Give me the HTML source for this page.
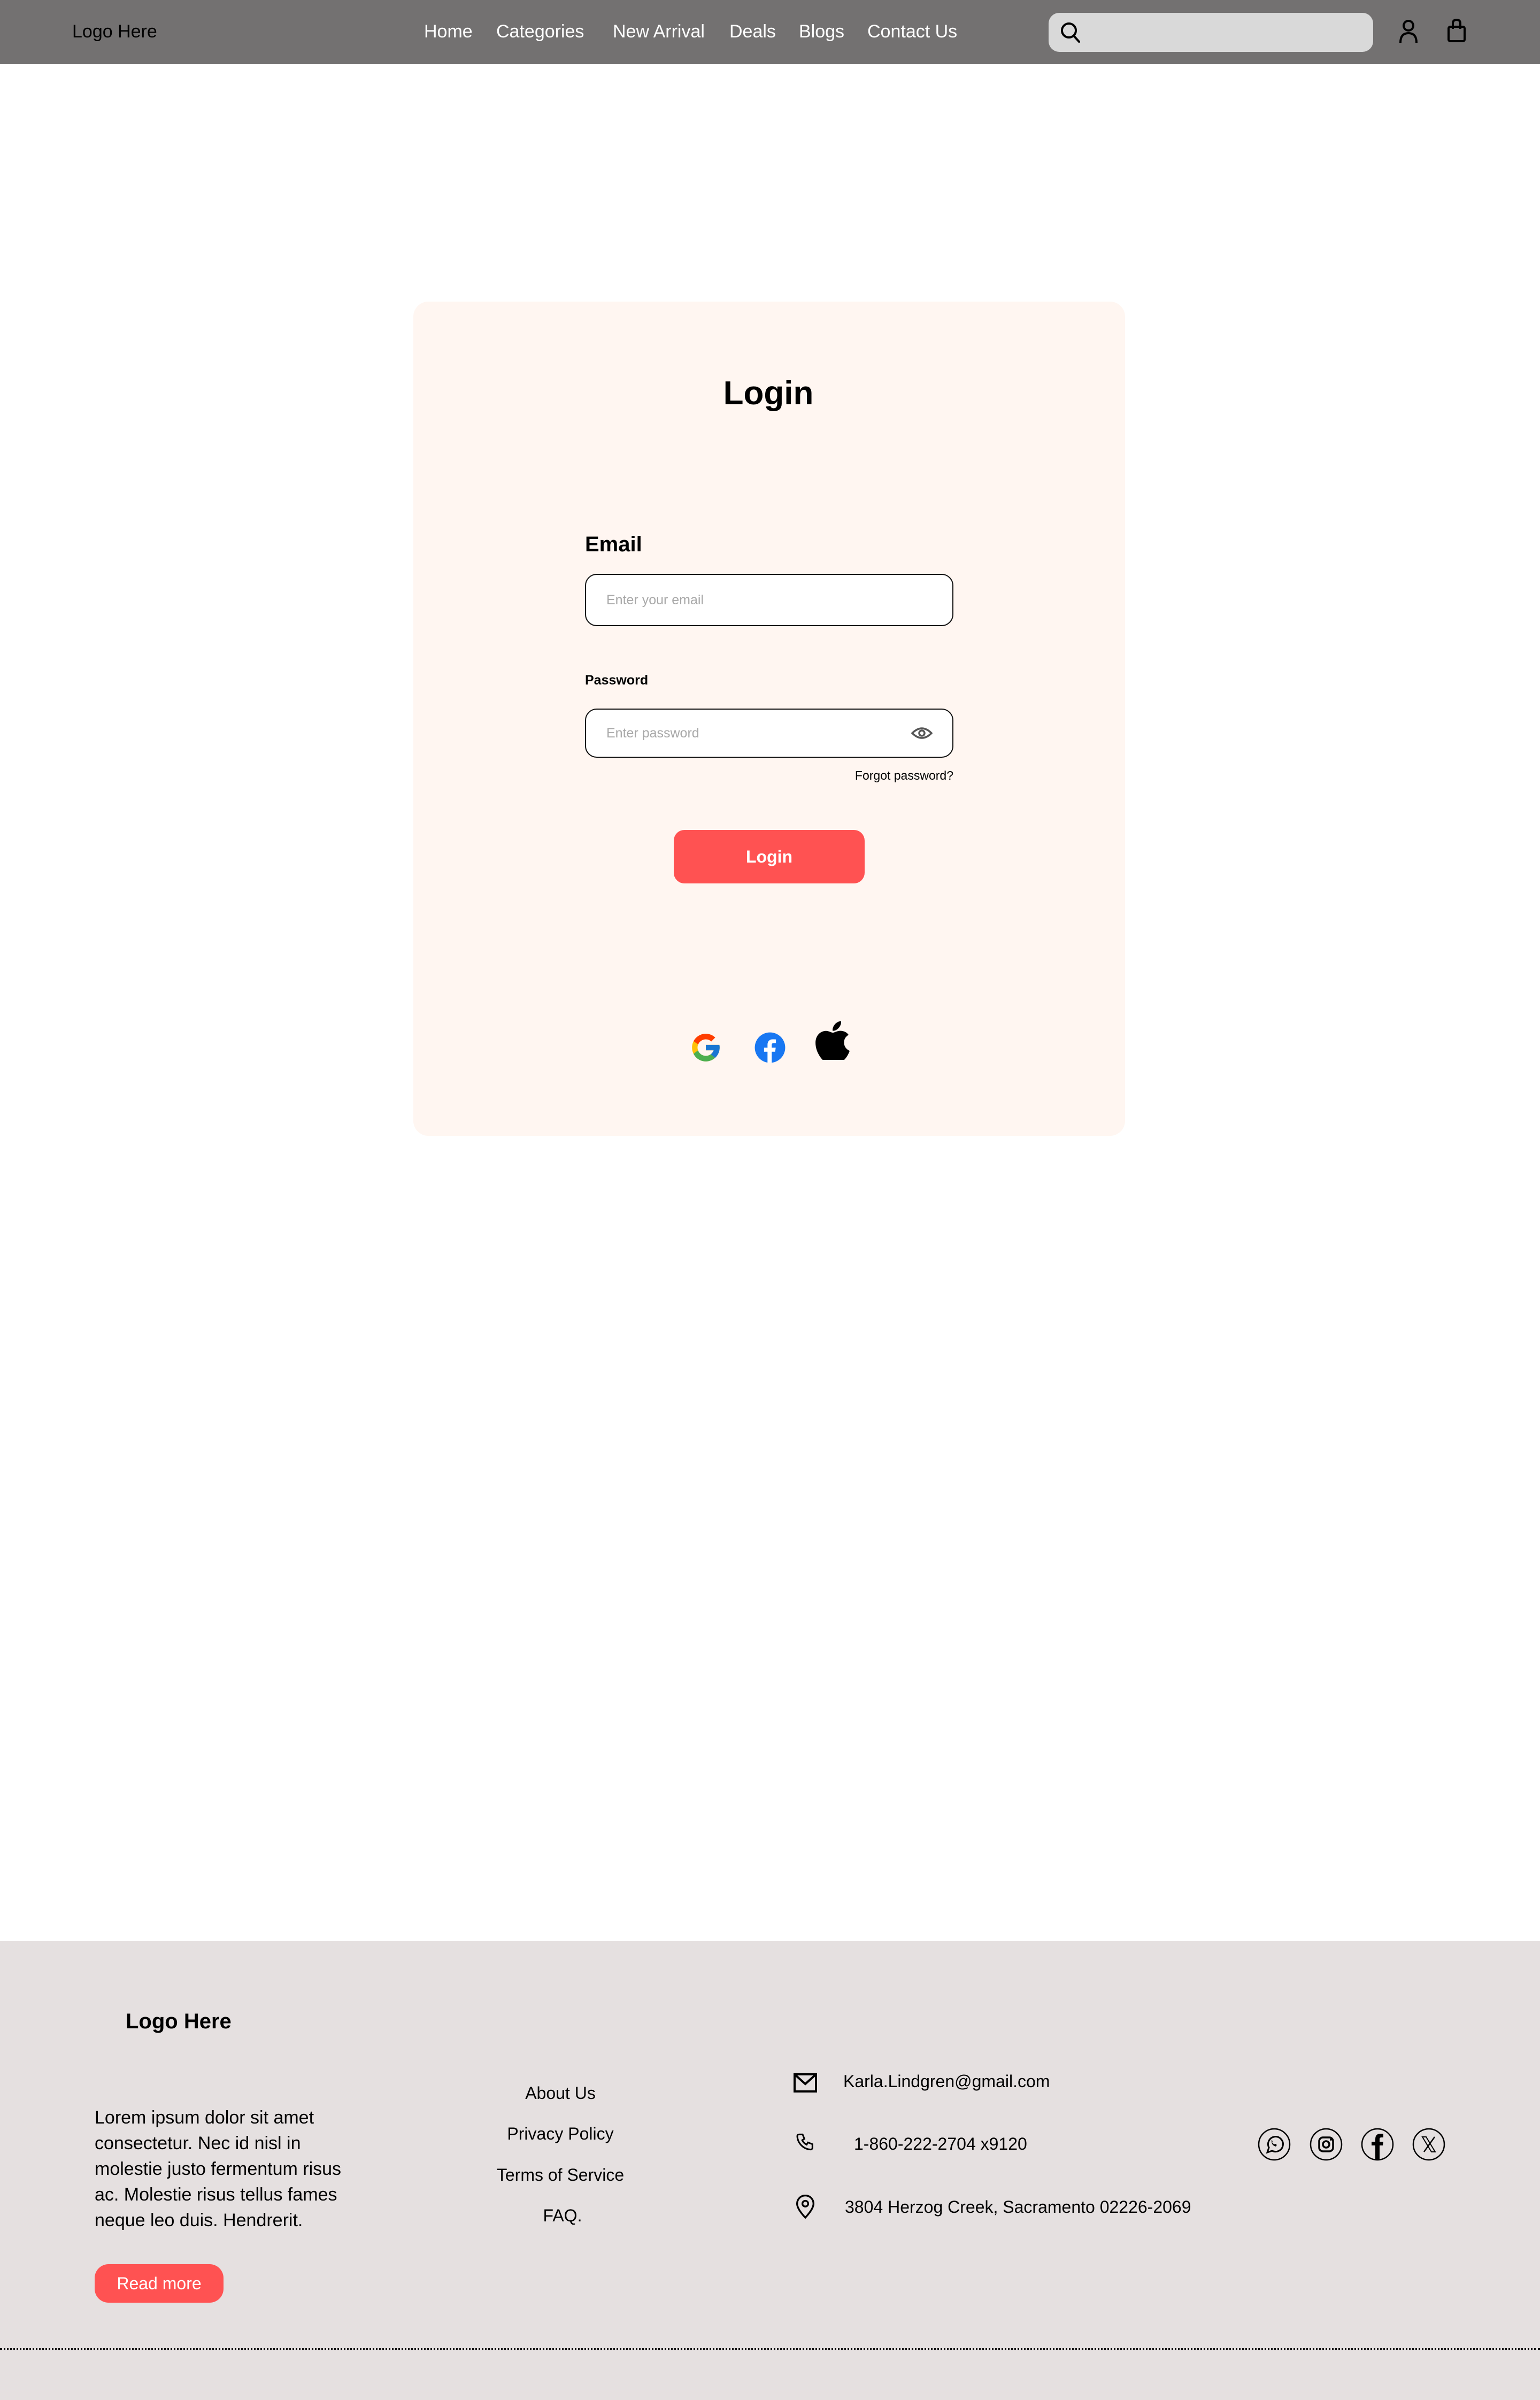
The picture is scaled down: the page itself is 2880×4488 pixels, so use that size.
<!DOCTYPE html>
<html><head><meta charset="utf-8"><style>
*{margin:0;padding:0;box-sizing:border-box}
body{width:2880px;height:4488px;position:relative;background:#fff;font-family:"Liberation Sans",sans-serif;overflow:hidden}
.a{position:absolute;white-space:nowrap}
nav{position:absolute;left:0;top:0;width:2880px;height:120px;background:#737171}
.nl{color:#fff;font-size:34px;top:40px}
.card{position:absolute;left:773px;top:564px;width:1331px;height:1560px;background:#fff6f1;border-radius:28px}
.inp{position:absolute;left:1094px;width:689px;border:2.5px solid #111;border-radius:22px;background:#fff}
.ph{color:#a8a8a8;font-size:25px}
footer{position:absolute;left:0;top:3630px;width:2880px;height:858px;background:#e5e0e0}
.fl{font-size:32px;color:#000;width:400px;text-align:center;left:848px}
.ci{font-size:32px;color:#000}
</style></head><body>
<nav>
<div class="a" style="left:135px;top:40px;font-size:34px;color:#000">Logo Here</div>
<div class="a nl" style="left:793px">Home</div>
<div class="a nl" style="left:928px">Categories</div>
<div class="a nl" style="left:1146px">New Arrival</div>
<div class="a nl" style="left:1364px">Deals</div>
<div class="a nl" style="left:1494px">Blogs</div>
<div class="a nl" style="left:1622px">Contact Us</div>
<div class="a" style="left:1961px;top:24px;width:607px;height:73px;background:#d9d9d9;border-radius:20px"></div>
<svg class="a" style="left:1982px;top:40px" width="40" height="42" viewBox="0 0 40 42"><circle cx="17" cy="17" r="13" fill="none" stroke="#000" stroke-width="4"/><path d="M27 28 L36 38" stroke="#000" stroke-width="4" stroke-linecap="round"/></svg>
<svg class="a" style="left:2616px;top:36px" width="36" height="46" viewBox="0 0 36 46"><circle cx="18" cy="12" r="9" fill="none" stroke="#000" stroke-width="4"/><path d="M3 44 Q3 26 18 26 Q33 26 33 44" fill="none" stroke="#000" stroke-width="4"/></svg>
<svg class="a" style="left:2706px;top:34px" width="36" height="46" viewBox="0 0 36 46"><rect x="3" y="16" width="30" height="27" rx="3" fill="none" stroke="#000" stroke-width="4"/><path d="M11 20 V10 Q11 3 18 3 Q25 3 25 10 V20" fill="none" stroke="#000" stroke-width="4"/></svg>
</nav>

<div class="card"></div>
<div class="a" style="left:1237px;width:400px;text-align:center;top:700px;font-size:62px;font-weight:bold">Login</div>
<div class="a" style="left:1094px;top:996px;font-size:40px;font-weight:bold">Email</div>
<div class="inp" style="top:1073px;height:98px"></div>
<div class="a ph" style="left:1134px;top:1108px">Enter your email</div>
<div class="a" style="left:1094px;top:1258px;font-size:25px;font-weight:bold">Password</div>
<div class="inp" style="top:1325px;height:92px"></div>
<div class="a ph" style="left:1134px;top:1357px">Enter password</div>
<svg class="a" style="left:1704px;top:1358px" width="40" height="26" viewBox="0 0 40 26"><path d="M2 13 Q20 -5 38 13 Q20 31 2 13Z" fill="none" stroke="#555" stroke-width="3.5"/><circle cx="20" cy="13" r="5" fill="none" stroke="#555" stroke-width="3.5"/></svg>
<div class="a" style="left:1483px;width:300px;text-align:right;top:1437px;font-size:23px">Forgot password?</div>
<div class="a" style="left:1260px;top:1552px;width:357px;height:100px;background:#ff5252;border-radius:20px;color:#fff;font-size:32px;font-weight:bold;text-align:center;line-height:100px">Login</div>

<svg class="a" style="left:1289px;top:1928px" width="62" height="62" viewBox="0 0 48 48"><path fill="#FFC107" d="M43.6 20H42V20H24v8h11.3C33.7 32.7 29.2 36 24 36c-6.6 0-12-5.4-12-12s5.4-12 12-12c3.1 0 5.8 1.2 7.900 3.1l5.700-5.700C34 6.100 29.300 4 24 4 13 4 4 13 4 24s9 20 20 20 20-9 20-20c0-1.300-.1-2.700-.4-4z"/><path fill="#FF3D00" d="M6.300 14.700l6.600 4.800C14.700 15.100 19 12 24 12c3.100 0 5.800 1.200 7.900 3.100l5.700-5.700C34 6.100 29.300 4 24 4 16.300 4 9.700 8.300 6.300 14.700z"/><path fill="#4CAF50" d="M24 44c5.200 0 9.900-2 13.400-5.200l-6.200-5.200C29.200 35.100 26.700 36 24 36c-5.200 0-9.600-3.300-11.300-8l-6.500 5C9.500 39.600 16.200 44 24 44z"/><path fill="#1976D2" d="M43.600 20H42V20H24v8h11.300c-.8 2.200-2.200 4.200-4.100 5.600l6.200 5.200C37 39.200 44 34 44 24c0-1.300-.1-2.700-.4-4z"/></svg>
<svg class="a" style="left:1409px;top:1928px" width="62" height="62" viewBox="0 0 48 48"><circle cx="24" cy="24" r="22" fill="#1877F2"/><path fill="#fff" d="M26.5 46V30h5l.8-6h-5.8v-3.6c0-1.7.5-2.9 3-2.9h3.1v-5.3c-.5-.1-2.4-.2-4.6-.2-4.5 0-7.6 2.8-7.6 7.8V24h-5v6h5v16z"/></svg>
<svg class="a" style="left:1524px;top:1904px" width="66" height="78" viewBox="0 0 384 460"><path fill="#000" d="M318.7 268.7c-.2-36.7 16.4-64.4 50-84.8-18.8-26.9-47.2-41.7-84.7-44.6-35.5-2.8-74.3 20.7-88.5 20.7-15 0-49.4-19.7-76.4-19.7C63.3 141.2 4 184.8 4 273.5q0 39.3 14.4 81.2c12.8 36.7 59 126.7 107.2 125.2 25.2-.6 43-17.9 75.8-17.9 31.8 0 48.3 17.9 76.4 17.9 48.6-.7 90.4-82.5 102.6-119.3-65.2-30.7-61.7-90-61.7-91.9zm-56.6-164.2c27.3-32.4 24.8-61.9 24-72.5-24.1 1.4-52 16.4-67.9 34.9-17.5 19.8-27.8 44.3-25.6 71.9 26.1 2 49.9-11.4 69.5-34.3z"/></svg>

<footer>
<div class="a" style="left:235px;top:128px;font-size:40px;font-weight:bold">Logo Here</div>
<div class="a" style="left:177px;top:306px;font-size:34px;line-height:48px">Lorem ipsum dolor sit amet<br>consectetur. Nec id nisl in<br>molestie justo fermentum risus<br>ac. Molestie risus tellus fames<br>neque leo duis. Hendrerit.</div>
<div class="a" style="left:177px;top:604px;width:241px;height:72px;background:#ff5252;border-radius:26px;color:#fff;font-size:32px;text-align:center;line-height:72px">Read more</div>
<div class="a fl" style="top:266px">About Us</div>
<div class="a fl" style="top:342px">Privacy Policy</div>
<div class="a fl" style="top:419px">Terms of Service</div>
<div class="a fl" style="top:495px;left:852px">FAQ.</div>
<svg class="a" style="left:1484px;top:247px" width="44" height="36" viewBox="0 0 44 36"><rect x="2" y="2" width="40" height="32" fill="none" stroke="#000" stroke-width="4"/><path d="M2 2 L22 20 L42 2" fill="none" stroke="#000" stroke-width="4"/></svg>
<div class="a ci" style="left:1577px;top:244px">Karla.Lindgren@gmail.com</div>
<svg class="a" style="left:1486px;top:358px" width="40" height="40" viewBox="0 0 24 24"><path d="M5 2h4l2 5-2.5 1.5a11 11 0 0 0 5 5L15 11l5 2v4a2 2 0 0 1-2 2A16 16 0 0 1 3 4a2 2 0 0 1 2-2" fill="none" stroke="#000" stroke-width="1.8"/></svg>
<div class="a ci" style="left:1597px;top:361px">1-860-222-2704 x9120</div>
<svg class="a" style="left:1487px;top:474px" width="38" height="46" viewBox="0 0 24 30"><path d="M12 28 C12 28 2 18 2 11 a10 10 0 0 1 20 0 C22 18 12 28 12 28Z" fill="none" stroke="#000" stroke-width="2.2"/><circle cx="12" cy="11" r="3.5" fill="none" stroke="#000" stroke-width="2.2"/></svg>
<div class="a ci" style="left:1580px;top:479px">3804 Herzog Creek, Sacramento 02226-2069</div>
<svg class="a" style="left:2350px;top:348px" width="360" height="64" viewBox="0 0 360 64">
<g fill="none" stroke="#000" stroke-width="2.5"><circle cx="33" cy="32" r="29"/><circle cx="130" cy="32" r="29"/><circle cx="226" cy="32" r="29"/><circle cx="322" cy="32" r="29"/></g>
<path d="M20 47 L23 38 A14 14 0 1 1 29 44 Z" fill="none" stroke="#000" stroke-width="3"/><path d="M28 26 q0 8 8 10 l2-3 -3-2 -2 1 q-3-2-4-4 l1-2 -2-3z" fill="#000"/>
<rect x="117" y="19" width="26" height="26" rx="7" fill="none" stroke="#000" stroke-width="3.5"/><circle cx="130" cy="32" r="6" fill="none" stroke="#000" stroke-width="3.5"/><circle cx="139" cy="23" r="2" fill="#000"/>
<path d="M222 61 V34 h-7 v-7 h7 v-5 q0-10 10-10 h5 v7 h-4 q-3 0-3 3 v5 h7 l-1 7 h-6 V61z" fill="#000"/>
<path d="M310 18 h7 l17 28 h-7z" fill="none" stroke="#000" stroke-width="2"/><path d="M333 18 L313 46" stroke="#000" stroke-width="2.5"/>
</svg>
<div class="a" style="left:0;top:761px;width:2880px;border-top:3px dotted #000"></div>
</footer>
</body></html>
